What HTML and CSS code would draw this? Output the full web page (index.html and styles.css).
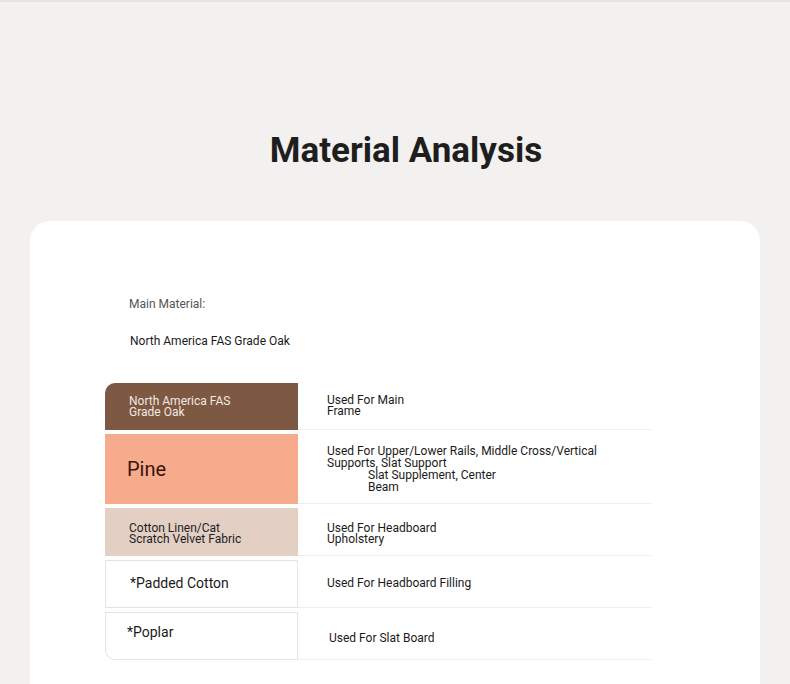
FILE: index.html
```html
<!DOCTYPE html>
<html>
	<head>
		<meta charset="UTF-8"/>
		<title>Material Analysis</title>
		<link rel="stylesheet" href="styles.css">
	</head>
	<body>
		<div class="topline"></div>

		<h1 class="title">Material Analysis</h1>

		<div class="card">
		  <p class="main-label">Main Material:</p>
		  <p class="main-value">North America FAS Grade Oak</p>

		  <div class="materials">

			<div class="mat oak">North America FAS<br>Grade Oak</div>
			<div class="use"><span class="w-main">Used For Main Frame</span></div>

			<div class="mat pine">Pine</div>
			<div class="use">
			  <span class="w-long">Used For Upper/Lower Rails, Middle Cross/Vertical Supports, Slat Support</span>
			  <span class="w-indent">Slat Supplement, Center Beam</span>
			</div>

			<div class="mat fabric">Cotton Linen/Cat<br>Scratch Velvet Fabric</div>
			<div class="use lower"><span class="w-head">Used For Headboard Upholstery</span></div>

			<div class="mat plain padded">*Padded Cotton</div>
			<div class="use">Used For Headboard Filling</div>

			<div class="mat plain poplar">*Poplar</div>
			<div class="use slat">Used For Slat Board</div>

		  </div>
		</div>
	</body>
</html>
```

FILE: styles.css
```css
* {
  box-sizing: border-box;
}

body {
  margin: 0;
  background: #f2f1ef;
  font-family: Roboto, "Liberation Sans", sans-serif;
  color: #222;
}

.topline {
  height: 2px;
  background: #e8e2db;
}

.title {
  margin: 0;
  padding: 128px 0 0 22px;
  text-align: center;
  font-size: 35px;
  font-weight: 700;
  line-height: 42px;
  color: #1e1e1e;
}

.card {
  margin: 49px 30px 0;
  padding: 76px 109px 24px 75px;
  background: #fff;
  border-radius: 20px;
  height: 500px;
}

.main-label {
  margin: 0 0 0 24px;
  font-size: 12px;
  line-height: 14px;
  color: #555;
}

.main-value {
  margin: 23px 0 0 25px;
  font-size: 12px;
  line-height: 14px;
  color: #1a1a1a;
}

.materials {
  display: grid;
  grid-template-columns: 193px 353px;
  grid-template-rows: 47px 70px 48px 48px 48px;
  row-gap: 4px;
  margin-top: 35px;
}

.mat {
  display: flex;
  align-items: center;
  padding-left: 24px;
  font-size: 12px;
  line-height: 11px;
}

.oak {
  background: #7d5843;
  color: #f3e9e1;
  border-top-left-radius: 10px;
}

.pine {
  background: #f5ab8c;
  color: #3b1508;
  font-size: 20px;
  line-height: 24px;
  padding-left: 22px;
}

.fabric {
  background: #e3cfc3;
  color: #1e1e1e;
  padding-top: 3px;
}

.plain {
  border: 1px solid #e4e4e4;
  font-size: 14px;
  line-height: 16px;
  color: #1a1a1a;
}

.padded {
  padding-left: 24px;
  padding-bottom: 3px;
}

.poplar {
  padding-left: 21px;
  padding-bottom: 8px;
  border-bottom-left-radius: 10px;
}

.use {
  display: flex;
  flex-direction: column;
  justify-content: center;
  padding-left: 29px;
  border-bottom: 1px solid #eeeeee;
  font-size: 12px;
  line-height: 11px;
  color: #1a1a1a;
}

.lower {
  padding-top: 5px;
}

.slat {
  padding-left: 31px;
  padding-top: 5px;
}

.w-main {
  width: 90px;
}

.w-head {
  width: 125px;
}

.w-long {
  width: 285px;
  line-height: 12px;
}

.w-indent {
  width: 185px;
  padding-left: 41px;
  line-height: 12px;
}
```
